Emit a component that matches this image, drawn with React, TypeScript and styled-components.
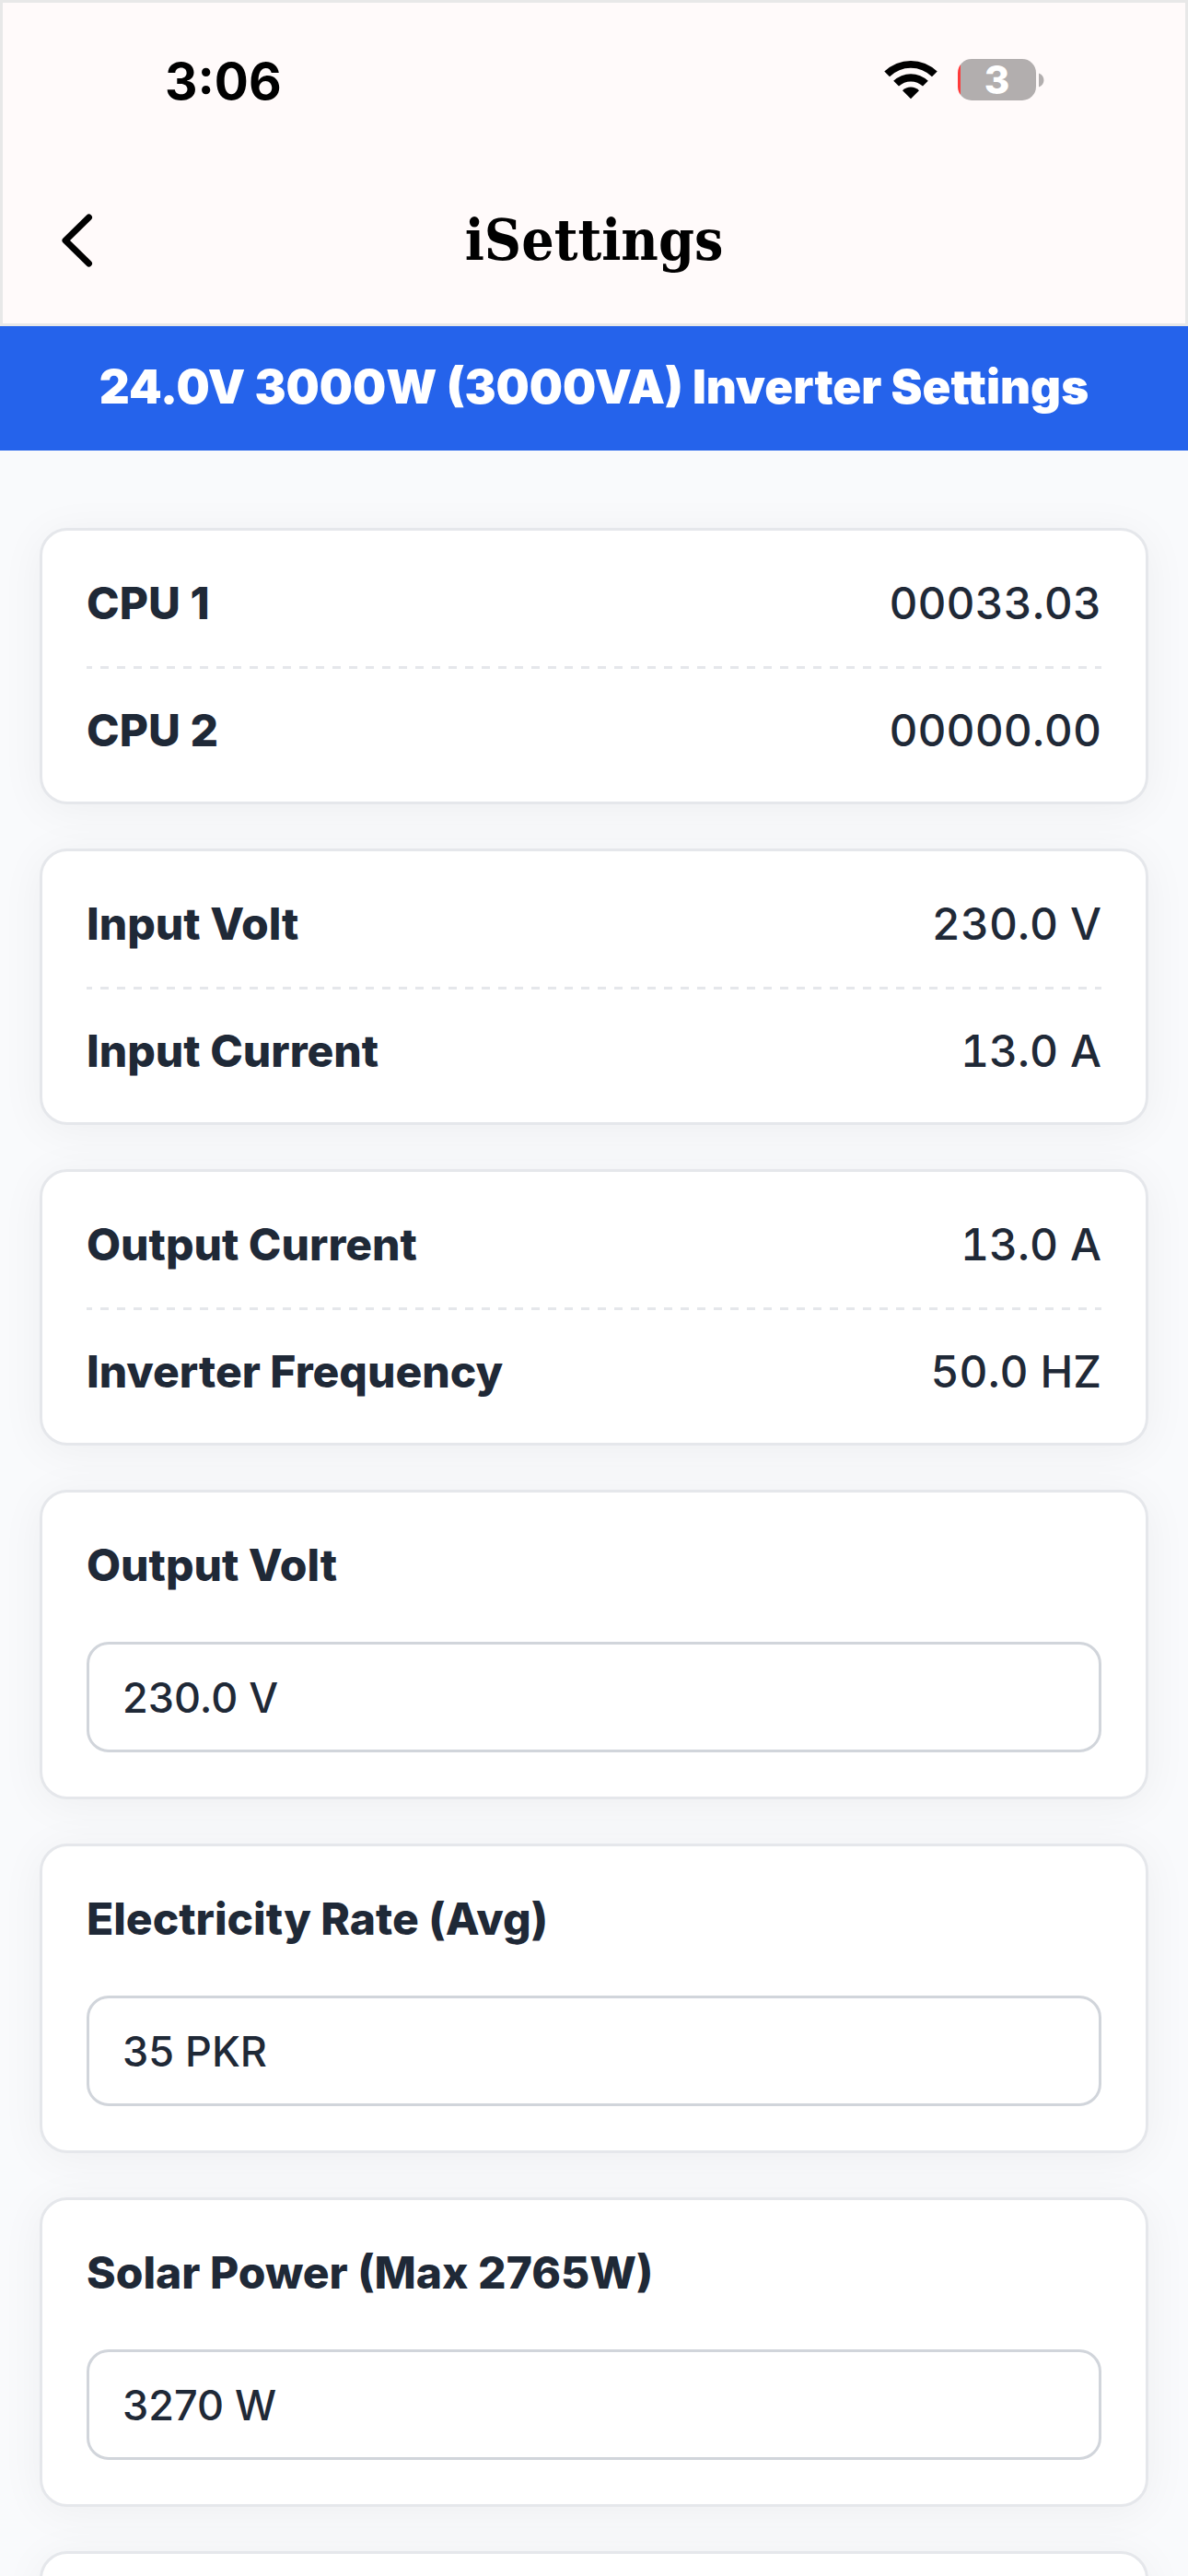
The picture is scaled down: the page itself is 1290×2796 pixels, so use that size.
import React, { useState } from "react";
import styled, { createGlobalStyle } from "styled-components";

const GlobalStyle = createGlobalStyle`
  *, *::before, *::after { box-sizing: border-box; }
  body {
    margin: 0;
    background: #f9fafc;
    color: #1f2937;
    font-family: Inter, "Liberation Sans", sans-serif;
  }
  #root {
    height: 100vh;
    overflow: hidden;
  }
`;

const Screen = styled.div`
  display: flex;
  flex-direction: column;
  height: 100%;
`;

const Header = styled.header`
  flex: none;
  background: #fffafa;
  border: 3px solid #e8e8e8;
  color: #000;
`;

const StatusBar = styled.div`
  display: flex;
  align-items: center;
  justify-content: space-between;
  height: 168px;
  padding: 0 153px 1px 176px;
`;

const Clock = styled.time`
  padding-top: 2px;
  font-size: 55px;
  line-height: 64px;
  font-weight: 700;
`;

const StatusIcons = styled.div`
  display: flex;
  align-items: center;
  gap: 22px;
`;

const BatteryBox = styled.div`
  display: flex;
  align-items: center;
  gap: 3px;
`;

const BatteryBody = styled.div`
  width: 85px;
  height: 45px;
  border-radius: 15px;
  background: linear-gradient(to right, #ff3b3b 3px, #b2aeae 3px);
  color: #fff;
  font-size: 42px;
  line-height: 45px;
  font-weight: 800;
  text-align: center;
`;

const NavBar = styled.nav`
  display: grid;
  grid-template-columns: 1fr auto 1fr;
  align-items: center;
  height: 180px;
  padding: 0 48px;
`;

const BackButton = styled.button`
  display: flex;
  justify-self: start;
  padding: 12px;
  border: 0;
  background: none;
  color: inherit;
`;

const Title = styled.h1`
  margin: 0;
  font-family: "DejaVu Serif Condensed", "DejaVu Serif", serif;
  font-size: 62px;
  line-height: 72px;
  font-weight: 700;
`;

const Banner = styled.h2`
  flex: none;
  margin: 0;
  padding: 36px 48px 39px;
  background: #2563eb;
  color: #fff;
  font-size: 51px;
  line-height: 60px;
  font-weight: 900;
  text-align: center;
`;

const CardList = styled.main`
  flex: 1;
  min-height: 0;
  overflow: hidden;
  display: flex;
  flex-direction: column;
  gap: 48px;
  padding: 84px 43px 0;
`;

const Card = styled.section<{ $bottom?: number }>`
  flex: none;
  padding: 48px 48px ${(p) => p.$bottom ?? 48}px;
  background: #fff;
  border: 3px solid #e5e7eb;
  border-radius: 30px;
  box-shadow: 0 6px 48px rgba(0, 0, 0, 0.05);
`;

const ReadingList = styled.dl`
  margin: 0;
`;

const Reading = styled.div`
  display: flex;
  justify-content: space-between;
  font-size: 48px;
  line-height: 62px;

  & + & {
    margin-top: 37px;
    padding-top: 39px;
    background: repeating-linear-gradient(
        to right,
        #e5e7eb 0 6px,
        transparent 6px 15px,
        #e5e7eb 15px 18px
      )
      top / 100% 3px no-repeat;
  }
`;

const ReadingName = styled.dt`
  font-weight: 800;
`;

const ReadingValue = styled.dd`
  margin: 0;
  font-weight: 500;
  font-variant-numeric: tabular-nums;
`;

const FieldLabel = styled.label`
  display: block;
  margin-bottom: 52px;
  font-size: 48px;
  line-height: 62px;
  font-weight: 800;
`;

const FieldInput = styled.input`
  display: block;
  width: 100%;
  height: 120px;
  padding: 0 36px;
  border: 3px solid #d1d5db;
  border-radius: 24px;
  background: #fff;
  color: inherit;
  font-family: inherit;
  font-size: 45px;
  font-weight: 500;
`;

const readingGroups = [
  [
    { name: "CPU 1", value: "00033.03" },
    { name: "CPU 2", value: "00000.00" },
  ],
  [
    { name: "Input Volt", value: "230.0 V" },
    { name: "Input Current", value: "13.0 A" },
  ],
  [
    { name: "Output Current", value: "13.0 A" },
    { name: "Inverter Frequency", value: "50.0 HZ" },
  ],
];

const fields = [
  { id: "output-volt", label: "Output Volt", initial: "230.0 V" },
  { id: "electricity-rate", label: "Electricity Rate (Avg)", initial: "35 PKR" },
  { id: "solar-power", label: "Solar Power (Max 2765W)", initial: "3270 W" },
];

function WifiIcon() {
  return (
    <svg width="58" height="43" viewBox="0 0 58 43" aria-label="Wi-Fi" role="img">
      <path d="M0.3 12.6 A41 41 0 0 1 57.7 12.6 L52 18.2 A33 33 0 0 0 6 18.2 Z" />
      <path d="M10.2 22.8 A27 27 0 0 1 47.8 22.8 L42 28.6 A19 19 0 0 0 16 28.6 Z" />
      <path d="M20 33.2 A13 13 0 0 1 38 33.2 L29 42.3 Z" />
    </svg>
  );
}

function Battery({ level }: { level: number }) {
  return (
    <BatteryBox>
      <BatteryBody>{level}</BatteryBody>
      <svg width="6" height="16" viewBox="0 0 6 16" aria-hidden="true">
        <path d="M0 0.5 C7.3 3 7.3 13 0 15.5 Z" fill="#b2aeae" />
      </svg>
    </BatteryBox>
  );
}

function Field({ id, label, initial }: { id: string; label: string; initial: string }) {
  const [value, setValue] = useState(initial);
  return (
    <Card>
      <FieldLabel htmlFor={id}>{label}</FieldLabel>
      <FieldInput id={id} value={value} onChange={(e) => setValue(e.target.value)} />
    </Card>
  );
}

export default function App() {
  return (
    <>
      <GlobalStyle />
      <Screen>
        <Header>
          <StatusBar>
            <Clock>3:06</Clock>
            <StatusIcons>
              <WifiIcon />
              <Battery level={3} />
            </StatusIcons>
          </StatusBar>
          <NavBar>
            <BackButton aria-label="Back">
              <svg width="44" height="60" viewBox="0 0 44 60" fill="none" stroke="currentColor" strokeWidth="7" strokeLinecap="round" strokeLinejoin="round">
                <path d="M33.5 5 L8 30 L33.5 55" />
              </svg>
            </BackButton>
            <Title>iSettings</Title>
          </NavBar>
        </Header>
        <Banner>24.0V 3000W (3000VA) Inverter Settings</Banner>
        <CardList>
          {readingGroups.map((group) => (
            <Card key={group[0].name} $bottom={46}>
              <ReadingList>
                {group.map((item) => (
                  <Reading key={item.name}>
                    <ReadingName>{item.name}</ReadingName>
                    <ReadingValue>{item.value}</ReadingValue>
                  </Reading>
                ))}
              </ReadingList>
            </Card>
          ))}
          {fields.map((field) => (
            <Field key={field.id} {...field} />
          ))}
          <Card />
        </CardList>
      </Screen>
    </>
  );
}
